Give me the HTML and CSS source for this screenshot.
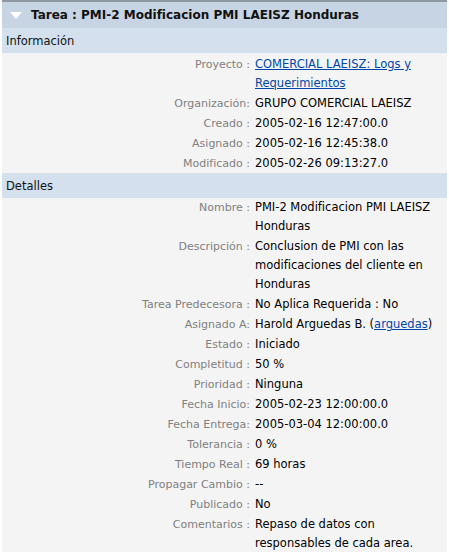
FILE: index.html
```html
<!DOCTYPE html>
<html lang="es">
<head>
<meta charset="utf-8">
<title>Tarea</title>
<link rel="stylesheet" href="styles.css">
</head>
<body>
<div class="panel">
  <div class="titlebar">
    <svg class="arrow" width="12" height="8" viewBox="0 0 12 8"><polygon points="0,0 12,0 6,7" fill="#ffffff"/></svg>
    <span class="title">Tarea : PMI-2 Modificacion PMI LAEISZ Honduras</span>
  </div>
  <div class="section">Información</div>
  <div class="rows rows-info">
    <div class="label">Proyecto :</div><div class="value"><a href="#">COMERCIAL LAEISZ: Logs y Requerimientos</a></div>
    <div class="label">Organización:</div><div class="value">GRUPO COMERCIAL LAEISZ</div>
    <div class="label">Creado :</div><div class="value">2005-02-16 12:47:00.0</div>
    <div class="label">Asignado :</div><div class="value">2005-02-16 12:45:38.0</div>
    <div class="label">Modificado :</div><div class="value">2005-02-26 09:13:27.0</div>
  </div>
  <div class="section">Detalles</div>
  <div class="rows rows-details">
    <div class="label">Nombre :</div><div class="value">PMI-2 Modificacion PMI LAEISZ Honduras</div>
    <div class="label">Descripción :</div><div class="value">Conclusion de PMI con las modificaciones del cliente en Honduras</div>
    <div class="label">Tarea Predecesora :</div><div class="value">No Aplica Requerida : No</div>
    <div class="label">Asignado A:</div><div class="value">Harold Arguedas B. (<a href="#">arguedas</a>)</div>
    <div class="label">Estado :</div><div class="value">Iniciado</div>
    <div class="label">Completitud :</div><div class="value">50 %</div>
    <div class="label">Prioridad :</div><div class="value">Ninguna</div>
    <div class="label">Fecha Inicio:</div><div class="value">2005-02-23 12:00:00.0</div>
    <div class="label">Fecha Entrega:</div><div class="value">2005-03-04 12:00:00.0</div>
    <div class="label">Tolerancia :</div><div class="value">0 %</div>
    <div class="label">Tiempo Real :</div><div class="value">69 horas</div>
    <div class="label">Propagar Cambio :</div><div class="value">--</div>
    <div class="label">Publicado :</div><div class="value">No</div>
    <div class="label">Comentarios :</div><div class="value">Repaso de datos con responsables de cada area.</div>
  </div>
</div>
</body>
</html>
```
FILE: styles.css
```css
html, body {
  margin: 0;
  padding: 0;
  background: #ffffff;
}
body {
  padding: 0 2px 0 2px;
  font-family: "DejaVu Sans", Verdana, sans-serif;
  font-size: 11px;
  color: #000000;
}
.panel {
  background: #f4f4f4;
  border-top: 2px solid #8f99a5;
  min-height: 560px;
}
.titlebar {
  display: flex;
  align-items: center;
  gap: 9px;
  height: 26px;
  padding-left: 8px;
  background: #c7d4e4;
}
.arrow {
  display: block;
  margin-top: 1px;
}
.title {
  font-weight: bold;
  font-size: 12px;
  color: #111111;
}
.section {
  height: 25px;
  line-height: 26px;
  padding-left: 4px;
  background: #d4e0ee;
  font-size: 11.5px;
  color: #111111;
}
.rows {
  display: grid;
  grid-template-columns: 248px 1fr;
  column-gap: 5px;
  row-gap: 1px;
  padding: 0 7px 0 0;
  line-height: 19px;
}
.rows-info {
  padding-top: 2px;
}
.label {
  text-align: right;
  color: #808080;
}
.value {
  color: #000000;
  font-size: 11.5px;
}
.value a {
  color: #0046a8;
  text-decoration: underline;
}
```
